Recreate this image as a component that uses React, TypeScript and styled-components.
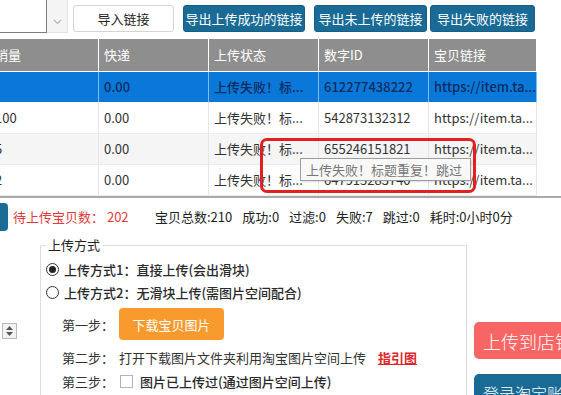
import React from 'react';
import styled, { createGlobalStyle } from 'styled-components';

const GlobalStyle = createGlobalStyle`
  html, body { margin: 0; padding: 0; background: #fff; }
  body {
    font-family: "Noto Sans CJK SC", "Microsoft YaHei", sans-serif;
    font-size: 13px;
    color: #222;
  }
  * { box-sizing: border-box; }
`;

const Screen = styled.div`
  position: relative;
  width: 561px;
  height: 395px;
  overflow: hidden;
  background: #fff;
`;

/* ---------- top bar ---------- */
const TopBar = styled.div`
  display: flex;
  align-items: flex-start;
  height: 39px;
`;

const LinkBox = styled.div`
  display: flex;
  width: 70px;
  height: 33px;
  flex: none;
`;

const LinkText = styled.div`
  width: 47px;
  border-right: 1px solid #7c7c7c;
  border-bottom: 1px solid #7c7c7c;
  background: #fff;
`;

const LinkScroll = styled.div`
  width: 21px;
  background: #f4f4f4;
  border-bottom: 1px solid #e2e2e2;
  border-right: 1px solid #e2e2e2;
  display: flex;
  align-items: flex-end;
  justify-content: center;
  padding-bottom: 7px;
`;

const TopButton = styled.button<{ $variant?: 'light' | 'blue'; $w: number; $ml: number }>`
  margin-top: 5px;
  margin-left: ${p => p.$ml}px;
  width: ${p => p.$w}px;
  height: 27px;
  flex: none;
  padding: 0;
  border-radius: 3px;
  font-family: inherit;
  font-size: 13px;
  line-height: 25px;
  white-space: nowrap;
  cursor: pointer;
  ${p =>
    p.$variant === 'blue'
      ? `background:#196b96; color:#fff; border:1px solid #155e85;`
      : `background:#fff; color:#222; border:1px solid #d4d4d4;`}
`;

/* ---------- table ---------- */
const TableViewport = styled.div`
  height: 159px;
  overflow: hidden;
  border-bottom: 2px solid #a9a9a9;
`;

const Grid = styled.div`
  display: grid;
  grid-template-columns: 109px 110px 110px 110px 108px;
  grid-auto-rows: 31px;
  grid-template-rows: 33px;
  margin-left: -10px;
  width: 547px;
`;

const HeadCell = styled.div`
  background: #8e8e8e;
  color: #fff;
  padding-left: 5px;
  line-height: 32px;
  border-right: 1px solid #fff;
  border-bottom: 1px solid #fff;
  white-space: nowrap;
  overflow: hidden;
`;

const Cell = styled.div<{ $sel?: boolean; $alt?: boolean }>`
  padding-left: 5px;
  line-height: 30px;
  white-space: nowrap;
  overflow: hidden;
  border-bottom: 1px solid ${p => (p.$sel ? '#fff' : '#ececec')};
  border-right: 1px solid ${p => (p.$sel ? '#7fbdf0' : '#e6e6e6')};
  background: ${p => (p.$sel ? '#0a78d8' : p.$alt ? '#f5f5f5' : '#fff')};
  color: ${p => (p.$sel ? '#0f2c5c' : '#333')};
  font-weight: ${p => (p.$sel ? 500 : 400)};
`;

/* ---------- overlays ---------- */
const Highlight = styled.div`
  position: absolute;
  left: 260px;
  top: 138px;
  width: 216px;
  height: 55px;
  border: 3px solid #e3201f;
  border-radius: 7px;
  pointer-events: none;
`;

const Tooltip = styled.div`
  position: absolute;
  left: 300px;
  top: 158px;
  width: 171px;
  height: 23px;
  background: #f8f8f8;
  border: 1px solid #9c9c9c;
  color: #777;
  font-size: 13px;
  line-height: 21px;
  padding-left: 5px;
  white-space: nowrap;
  box-shadow: 1px 1px 2px rgba(0, 0, 0, 0.15);
`;

/* ---------- status ---------- */
const StatusRow = styled.div`
  display: flex;
  align-items: center;
  height: 38px;
  padding-bottom: 1px;
`;

const SideTab = styled.div`
  width: 8px;
  height: 28px;
  background: #196b96;
  border-radius: 0 4px 4px 0;
  flex: none;
`;

const PendingText = styled.span`
  color: #e23a3a;
  margin-left: 5px;
  width: 142px;
  flex: none;
  white-space: nowrap;
`;

const Stats = styled.div`
  display: flex;
  gap: 10px;
  color: #222;
  white-space: nowrap;
`;

/* ---------- lower area ---------- */
const Lower = styled.div`
  display: flex;
  height: 159px;
`;

const LeftStrip = styled.div`
  width: 40px;
  flex: none;
  padding-top: 87px;
  padding-left: 2px;
`;

const Spinner = styled.div`
  width: 15px;
  height: 16px;
  border: 1px solid #b9b9b9;
  background: #f2f2f2;
  display: flex;
  flex-direction: column;
  align-items: center;
  justify-content: center;
  gap: 2px;
`;

const Group = styled.fieldset`
  width: 427px;
  flex: none;
  margin: 0;
  padding: 4px 0 0 5px;
  border: 1px solid #dcdcdc;
  border-bottom: none;
  display: flex;
  flex-direction: column;
`;

const GroupTitle = styled.legend`
  padding: 0 2px;
  line-height: 18px;
  font-size: 13px;
  color: #222;
`;

const RadioRow = styled.label`
  display: flex;
  align-items: center;
  height: 23px;
  flex: none;
  gap: 5px;
  font-weight: 500;
  color: #2a2a2a;
  white-space: nowrap;
`;

const RadioDot = styled.span<{ $on?: boolean }>`
  width: 13px;
  height: 13px;
  border-radius: 50%;
  border: 1px solid #333;
  background: #fff;
  display: flex;
  align-items: center;
  justify-content: center;
  flex: none;
  &::after {
    content: '';
    width: 7px;
    height: 7px;
    border-radius: 50%;
    background: ${p => (p.$on ? '#222' : 'transparent')};
  }
`;

const StepRow = styled.div<{ $h: number; $mt: number }>`
  display: flex;
  align-items: center;
  flex: none;
  height: ${p => p.$h}px;
  margin-top: ${p => p.$mt}px;
  padding-left: 16px;
  white-space: nowrap;
  color: #333;
`;

const StepLabel = styled.span`
  width: 57px;
  flex: none;
`;

const OrangeButton = styled.button`
  width: 105px;
  height: 32px;
  border: none;
  border-radius: 4px;
  background: #f89a2e;
  color: #fff;
  font-family: inherit;
  font-size: 13px;
  padding: 0;
  cursor: pointer;
`;

const GuideLink = styled.a`
  margin-left: 12px;
  color: #e0262a;
  font-weight: 700;
  text-decoration: underline;
`;

const Check = styled.span`
  width: 13px;
  height: 13px;
  border: 1px solid #b4b4b4;
  background: #fff;
  margin-left: 1px;
  margin-right: 7px;
  flex: none;
`;

const BoldText = styled.span`
  font-weight: 500;
  color: #2a2a2a;
`;

const RightCol = styled.div`
  flex: none;
  padding-top: 86px;
  padding-left: 7px;
  display: flex;
  flex-direction: column;
  gap: 15px;
`;

const BigButton = styled.button<{ $color: string; $size: number }>`
  flex: none;
  width: 110px;
  height: 37px;
  border: none;
  border-radius: 5px;
  background: ${p => p.$color};
  color: #fff;
  font-family: inherit;
  font-size: ${p => p.$size}px;
  font-weight: 300;
  text-align: left;
  padding-left: 9px;
  white-space: nowrap;
  cursor: pointer;
`;

type Row = { qty: string; ship: string; status: string; id: string; link: string };

const rows: Row[] = [
  { qty: '', ship: '0.00', status: '上传失败！标...', id: '612277438222', link: 'https://item.ta...' },
  { qty: '100', ship: '0.00', status: '上传失败！标...', id: '542873132312', link: 'https://item.ta...' },
  { qty: '5', ship: '0.00', status: '上传失败！标...', id: '655246151821', link: 'https://item.ta...' },
  { qty: '2', ship: '0.00', status: '上传失败！标...', id: '647915283740', link: 'https://item.ta...' },
];

const heads = ['销量', '快递', '上传状态', '数字ID', '宝贝链接'];

export default function App() {
  return (
    <Screen>
      <GlobalStyle />
      <TopBar>
        <LinkBox>
          <LinkText />
          <LinkScroll>
            <svg width="9" height="6" viewBox="0 0 9 6">
              <path d="M1 1 L4.5 4.5 L8 1" fill="none" stroke="#b5b5b5" strokeWidth="1.2" />
            </svg>
          </LinkScroll>
        </LinkBox>
        <TopButton $variant="light" $w={101} $ml={3}>导入链接</TopButton>
        <TopButton $variant="blue" $w={122} $ml={9}>导出上传成功的链接</TopButton>
        <TopButton $variant="blue" $w={113} $ml={9}>导出未上传的链接</TopButton>
        <TopButton $variant="blue" $w={105} $ml={3}>导出失败的链接</TopButton>
      </TopBar>

      <TableViewport>
        <Grid>
          {heads.map(h => (
            <HeadCell key={h}>{h}</HeadCell>
          ))}
          {rows.map((r, i) => {
            const sel = i === 0;
            const alt = i === 2;
            return (
              <React.Fragment key={r.id}>
                <Cell $sel={sel} $alt={alt}>{r.qty}</Cell>
                <Cell $sel={sel} $alt={alt}>{r.ship}</Cell>
                <Cell $sel={sel} $alt={alt}>{r.status}</Cell>
                <Cell $sel={sel} $alt={alt}>{r.id}</Cell>
                <Cell $sel={sel} $alt={alt}>{r.link}</Cell>
              </React.Fragment>
            );
          })}
        </Grid>
      </TableViewport>

      <StatusRow>
        <SideTab />
        <PendingText>待上传宝贝数： 202</PendingText>
        <Stats>
          <span>宝贝总数:210</span>
          <span>成功:0</span>
          <span>过滤:0</span>
          <span>失败:7</span>
          <span>跳过:0</span>
          <span>耗时:0小时0分</span>
        </Stats>
      </StatusRow>

      <Lower>
        <LeftStrip>
          <Spinner>
            <svg width="7" height="4" viewBox="0 0 7 4"><path d="M0 4 L3.5 0 L7 4Z" fill="#555" /></svg>
            <svg width="7" height="4" viewBox="0 0 7 4"><path d="M0 0 L3.5 4 L7 0Z" fill="#555" /></svg>
          </Spinner>
        </LeftStrip>

        <Group>
          <GroupTitle>上传方式</GroupTitle>
          <RadioRow>
            <RadioDot $on />
            上传方式1：直接上传(会出滑块)
          </RadioRow>
          <RadioRow>
            <RadioDot />
            上传方式2：无滑块上传(需图片空间配合)
          </RadioRow>
          <StepRow $h={32} $mt={4}>
            <StepLabel>第一步：</StepLabel>
            <OrangeButton>下载宝贝图片</OrangeButton>
          </StepRow>
          <StepRow $h={24} $mt={5}>
            <StepLabel>第二步：</StepLabel>
            <span>打开下载图片文件夹利用淘宝图片空间上传</span>
            <GuideLink>指引图</GuideLink>
          </StepRow>
          <StepRow $h={24} $mt={0}>
            <StepLabel>第三步：</StepLabel>
            <Check />
            <BoldText>图片已上传过(通过图片空间上传)</BoldText>
          </StepRow>
        </Group>

        <RightCol>
          <BigButton $color="#f86565" $size={18}>上传到店铺</BigButton>
          <BigButton $color="#196b96" $size={16}>登录淘宝账号</BigButton>
        </RightCol>
      </Lower>

      <Highlight />
      <Tooltip>上传失败！标题重复！跳过</Tooltip>
    </Screen>
  );
}
